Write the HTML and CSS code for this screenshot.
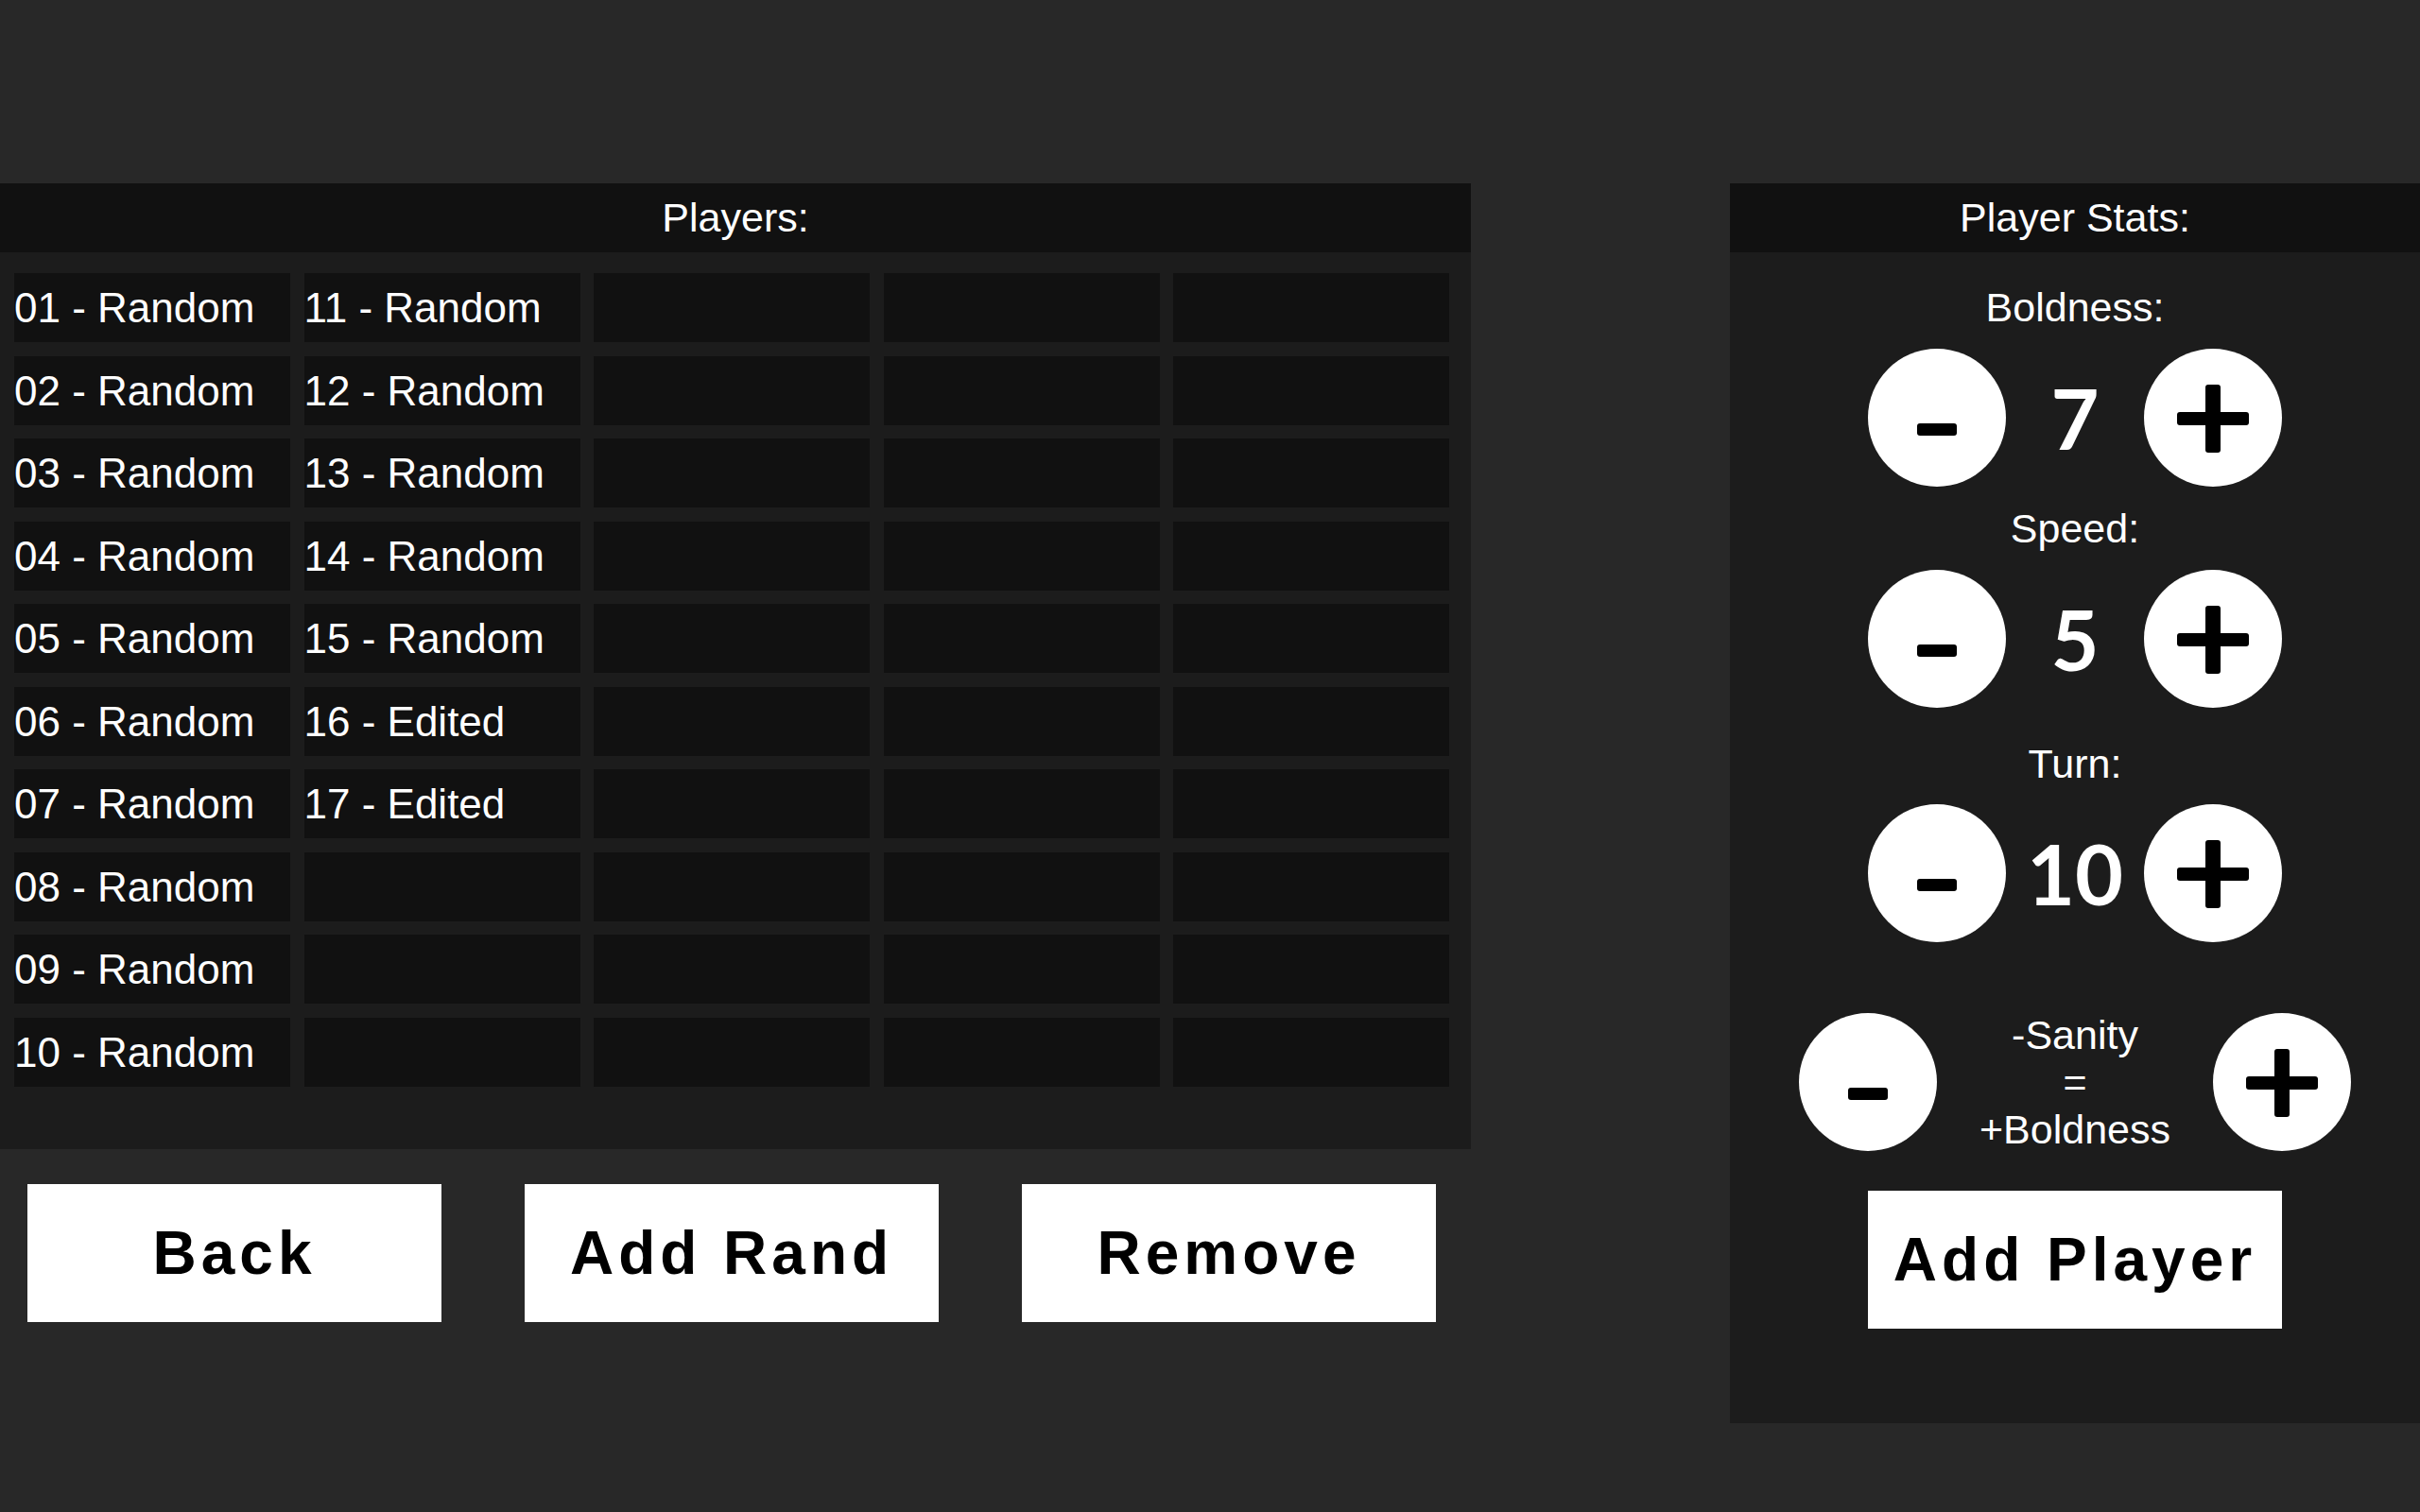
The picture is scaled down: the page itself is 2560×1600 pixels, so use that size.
FILE: index.html
```html
<!DOCTYPE html>
<html lang="en">

<head>
    <meta charset="UTF-8">
    <meta name="viewport" content="width=device-width, initial-scale=1.0">
    <title>Players</title>
    <link rel="stylesheet" href="styles.css">
</head>

<body>
    <div id="screen">
        <div id="left">
            <div class="panel" id="players">
                <div class="panel-title">Players:</div>
                <div id="grid">
                    <div class="cell">01 - Random</div>
                    <div class="cell">02 - Random</div>
                    <div class="cell">03 - Random</div>
                    <div class="cell">04 - Random</div>
                    <div class="cell">05 - Random</div>
                    <div class="cell">06 - Random</div>
                    <div class="cell">07 - Random</div>
                    <div class="cell">08 - Random</div>
                    <div class="cell">09 - Random</div>
                    <div class="cell">10 - Random</div>
                    <div class="cell">11 - Random</div>
                    <div class="cell">12 - Random</div>
                    <div class="cell">13 - Random</div>
                    <div class="cell">14 - Random</div>
                    <div class="cell">15 - Random</div>
                    <div class="cell">16 - Edited</div>
                    <div class="cell">17 - Edited</div>
                    <div class="cell"></div>
                    <div class="cell"></div>
                    <div class="cell"></div>
                    <div class="cell"></div><div class="cell"></div><div class="cell"></div><div class="cell"></div><div class="cell"></div>
                    <div class="cell"></div><div class="cell"></div><div class="cell"></div><div class="cell"></div><div class="cell"></div>
                    <div class="cell"></div><div class="cell"></div><div class="cell"></div><div class="cell"></div><div class="cell"></div>
                    <div class="cell"></div><div class="cell"></div><div class="cell"></div><div class="cell"></div><div class="cell"></div>
                    <div class="cell"></div><div class="cell"></div><div class="cell"></div><div class="cell"></div><div class="cell"></div>
                    <div class="cell"></div><div class="cell"></div><div class="cell"></div><div class="cell"></div><div class="cell"></div>
                </div>
            </div>

            <div id="actions">
                <button class="button">Back</button>
                <button class="button">Add Rand</button>
                <button class="button">Remove</button>
            </div>
        </div>

        <div class="panel" id="stats">
            <div class="panel-title">Player Stats:</div>

            <div class="label" id="bold-label">Boldness:</div>
            <div class="stat-row" id="bold-row">
                <button class="round">
                    <svg viewBox="0 0 146 146" width="146" height="146"><rect x="52" y="79" width="42" height="13" rx="3" /></svg>
                </button>
                <div class="value">7</div>
                <button class="round">
                    <svg viewBox="0 0 146 146" width="146" height="146"><rect x="35" y="67" width="76" height="14" rx="3" /><rect x="65" y="38" width="16" height="72" rx="3" /></svg>
                </button>
            </div>

            <div class="label" id="speed-label">Speed:</div>
            <div class="stat-row" id="speed-row">
                <button class="round">
                    <svg viewBox="0 0 146 146" width="146" height="146"><rect x="52" y="79" width="42" height="13" rx="3" /></svg>
                </button>
                <div class="value">5</div>
                <button class="round">
                    <svg viewBox="0 0 146 146" width="146" height="146"><rect x="35" y="67" width="76" height="14" rx="3" /><rect x="65" y="38" width="16" height="72" rx="3" /></svg>
                </button>
            </div>

            <div class="label" id="turn-label">Turn:</div>
            <div class="stat-row" id="turn-row">
                <button class="round">
                    <svg viewBox="0 0 146 146" width="146" height="146"><rect x="52" y="79" width="42" height="13" rx="3" /></svg>
                </button>
                <div class="value">10</div>
                <button class="round">
                    <svg viewBox="0 0 146 146" width="146" height="146"><rect x="35" y="67" width="76" height="14" rx="3" /><rect x="65" y="38" width="16" height="72" rx="3" /></svg>
                </button>
            </div>

            <div class="stat-row" id="sanity-row">
                <button class="round">
                    <svg viewBox="0 0 146 146" width="146" height="146"><rect x="52" y="79" width="42" height="13" rx="3" /></svg>
                </button>
                <div id="sanity">-Sanity<br>=<br>+Boldness</div>
                <button class="round">
                    <svg viewBox="0 0 146 146" width="146" height="146"><rect x="35" y="67" width="76" height="14" rx="3" /><rect x="65" y="38" width="16" height="72" rx="3" /></svg>
                </button>
            </div>

            <button class="button" id="add-player">Add Player</button>
        </div>
    </div>
</body>

</html>
```

FILE: styles.css
```css
body {
    margin: 0;
    background-color: #282828;
    font-family: 'Liberation Sans', Arial, sans-serif;
    color: #ffffff;
}

#screen {
    display: flex;
    justify-content: space-between;
    padding-top: 194px;
    height: 1406px;
}

#left {
    width: 1556px;
}

.panel {
    background-color: #1c1c1c;
}

.panel-title {
    align-self: stretch;
    background-color: #111111;
    height: 73px;
    line-height: 73px;
    font-size: 43px;
    text-align: center;
}

#players {
    height: 1022px;
}

#grid {
    display: grid;
    grid-auto-flow: column;
    grid-template-rows: repeat(10, 73px);
    grid-template-columns: repeat(5, 292px);
    gap: 14.5px;
    padding: 22px 0 0 15px;
}

.cell {
    background-color: #111111;
    font-size: 44px;
    line-height: 73px;
    white-space: nowrap;
}

#actions {
    display: flex;
    gap: 88px;
    padding-left: 29px;
    margin-top: 37px;
}

.button {
    width: 438px;
    height: 146px;
    border: none;
    padding: 0;
    background-color: #ffffff;
    color: #000000;
    font-family: 'Liberation Sans', Arial, sans-serif;
    font-weight: bold;
    font-size: 64px;
    letter-spacing: 5px;
    cursor: pointer;
}

#stats {
    width: 730px;
    height: 1312px;
    display: flex;
    flex-direction: column;
    align-items: center;
}

.label {
    font-size: 43px;
    line-height: 50px;
    text-align: center;
}

#bold-label {
    margin-top: 33px;
}

#speed-label {
    margin-top: 19px;
}

#turn-label {
    margin-top: 34px;
}

.stat-row {
    display: flex;
    align-items: center;
}

#bold-row,
#speed-row {
    margin-top: 19px;
}

#turn-row {
    margin-top: 18px;
}

#sanity-row {
    margin-top: 73px;
}

.round {
    width: 146px;
    height: 146px;
    border: none;
    border-radius: 50%;
    padding: 0;
    background-color: #ffffff;
    cursor: pointer;
}

.round svg {
    display: block;
    fill: #000000;
}

.value {
    width: 146px;
    text-align: center;
    font-family: Lato, 'Liberation Sans', sans-serif;
    font-weight: bold;
    font-size: 88px;
}

#sanity {
    width: 292px;
    text-align: center;
    font-size: 43px;
    line-height: 50px;
}

#add-player {
    margin-top: 40px;
}
```
